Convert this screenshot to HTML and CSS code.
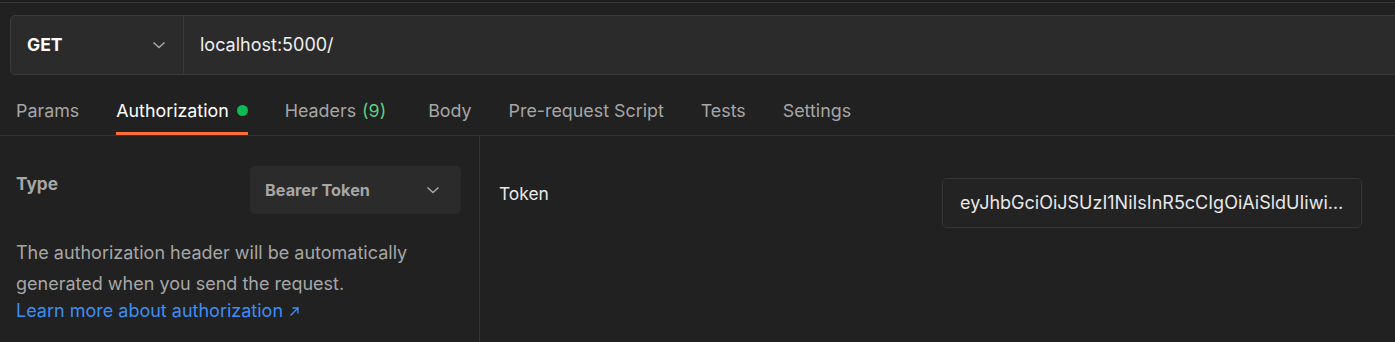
FILE: index.html
```html
<!DOCTYPE html>
<html lang="en">
<head>
    <meta charset="UTF-8">
    <meta name="viewport" content="width=device-width, initial-scale=1.0">
    <title>Request - Authorization</title>
    <link rel="stylesheet" href="styles.css">
</head>
<body>
    <main class="request">
        <div class="top-strip"></div>

        <div class="request-bar">
            <div class="method">
                <span>GET</span>
                <svg class="chevron" width="14" height="8" viewBox="0 0 14 8"><polyline points="1.5,1.5 7,6.5 12.5,1.5" fill="none" stroke="#a6a6a6" stroke-width="1.6"/></svg>
            </div>
            <div class="url">localhost:5000/</div>
        </div>

        <nav class="tabs">
            <div class="tab">Params</div>
            <div class="tab active">Authorization <span class="dot"></span></div>
            <div class="tab headers">Headers <span class="count">(9)</span></div>
            <div class="tab">Body</div>
            <div class="tab">Pre-request Script</div>
            <div class="tab">Tests</div>
            <div class="tab">Settings</div>
        </nav>

        <div class="auth">
            <section class="auth-type">
                <div class="type-row">
                    <p class="type-label">Type</p>
                    <div class="select">
                        <span>Bearer Token</span>
                        <svg class="chevron" width="14" height="8" viewBox="0 0 14 8"><polyline points="1.5,1.5 7,6.5 12.5,1.5" fill="none" stroke="#a6a6a6" stroke-width="1.6"/></svg>
                    </div>
                </div>
                <p class="auth-help">The authorization header will be automatically generated when you send the request.</p>
                <a class="learn-more" href="#">Learn more about authorization
                    <svg width="11" height="11" viewBox="0 0 11 11"><path d="M1.5 9.5 L9 2 M3.5 2 H9 V7.5" fill="none" stroke="#3d8df5" stroke-width="1.4"/></svg>
                </a>
            </section>

            <section class="auth-fields">
                <p class="field-label">Token</p>
                <div class="token-input">eyJhbGciOiJSUzI1NiIsInR5cCIgOiAiSldUIiwia2lkIiA6ICJ4c2V3bUpfTWZ3</div>
            </section>
        </div>
    </main>
</body>
</html>
```

FILE: styles.css
```css
* {
    margin: 0;
    box-sizing: border-box;
}
html, body {
    width: 100%;
    height: 100%;
}
body {
    background-color: #212121;
    font-family: Inter, "Noto Sans", sans-serif;
    font-size: 18px;
    line-height: 24px;
    color: #a6a6a6;
    overflow: hidden;
}
.top-strip {
    height: 3px;
    background-color: #1c1c1c;
    border-bottom: 1px solid #363636;
}
.request-bar {
    display: flex;
    height: 60px;
    margin: 12px -20px 0 10px;
    background-color: #2b2b2b;
    border: 1px solid #3a3a3a;
    border-radius: 5px;
}
.method {
    width: 173px;
    flex-shrink: 0;
    display: flex;
    align-items: center;
    justify-content: space-between;
    padding: 0 17px 0 16px;
    border-right: 1px solid #3a3a3a;
    color: #ffffff;
    font-size: 17.5px;
    font-weight: 700;
}
.url {
    display: flex;
    align-items: center;
    padding-left: 16px;
    color: #f0f0f0;
}
.tabs {
    display: flex;
    gap: 37px;
    height: 61px;
    padding-left: 16px;
    border-bottom: 1px solid #333333;
    font-size: 17.85px;
}
.tab {
    display: flex;
    align-items: center;
    gap: 8px;
    height: 60px;
    padding-top: 14px;
    border-bottom: 3px solid transparent;
    white-space: nowrap;
}
.tab.active {
    color: #ffffff;
    border-bottom-color: #ff6c37;
}
.tab.headers {
    gap: 6px;
    padding-right: 5px;
}
.dot {
    width: 11px;
    height: 11px;
    border-radius: 50%;
    background-color: #0cbb52;
}
.count {
    color: #5fcc85;
}
.auth {
    display: flex;
    height: 220px;
}
.auth-type {
    width: 480px;
    flex-shrink: 0;
    padding: 30px 18px 0 16px;
    border-right: 1px solid #333333;
}
.type-row {
    display: flex;
    justify-content: space-between;
    align-items: flex-start;
}
.type-label {
    margin-top: 6px;
    font-size: 17.3px;
    font-weight: 700;
    color: #a6a6a6;
}
.select {
    width: 211px;
    height: 48px;
    display: flex;
    align-items: center;
    justify-content: space-between;
    padding: 0 21px 0 15px;
    background-color: #2b2b2b;
    border-radius: 5px;
    font-size: 16.3px;
    font-weight: 700;
    color: #a6a6a6;
}
.auth-help {
    margin-top: 23px;
    font-size: 18px;
    line-height: 31px;
}
.learn-more {
    display: inline-flex;
    align-items: center;
    gap: 6px;
    color: #3d8df5;
    text-decoration: none;
}
.auth-fields {
    flex: 1;
    display: flex;
    justify-content: space-between;
    align-items: flex-start;
    padding: 42px 33px 0 19px;
}
.field-label {
    margin-top: 4px;
    font-size: 17.4px;
    color: #e8e8e8;
}
.token-input {
    width: 420px;
    height: 50px;
    line-height: 48px;
    padding: 0 16px 0 17px;
    border: 1px solid #353535;
    border-radius: 5px;
    background-color: #232323;
    color: #e8e8e8;
    font-size: 18px;
    white-space: nowrap;
    overflow: hidden;
    text-overflow: ellipsis;
}
```
